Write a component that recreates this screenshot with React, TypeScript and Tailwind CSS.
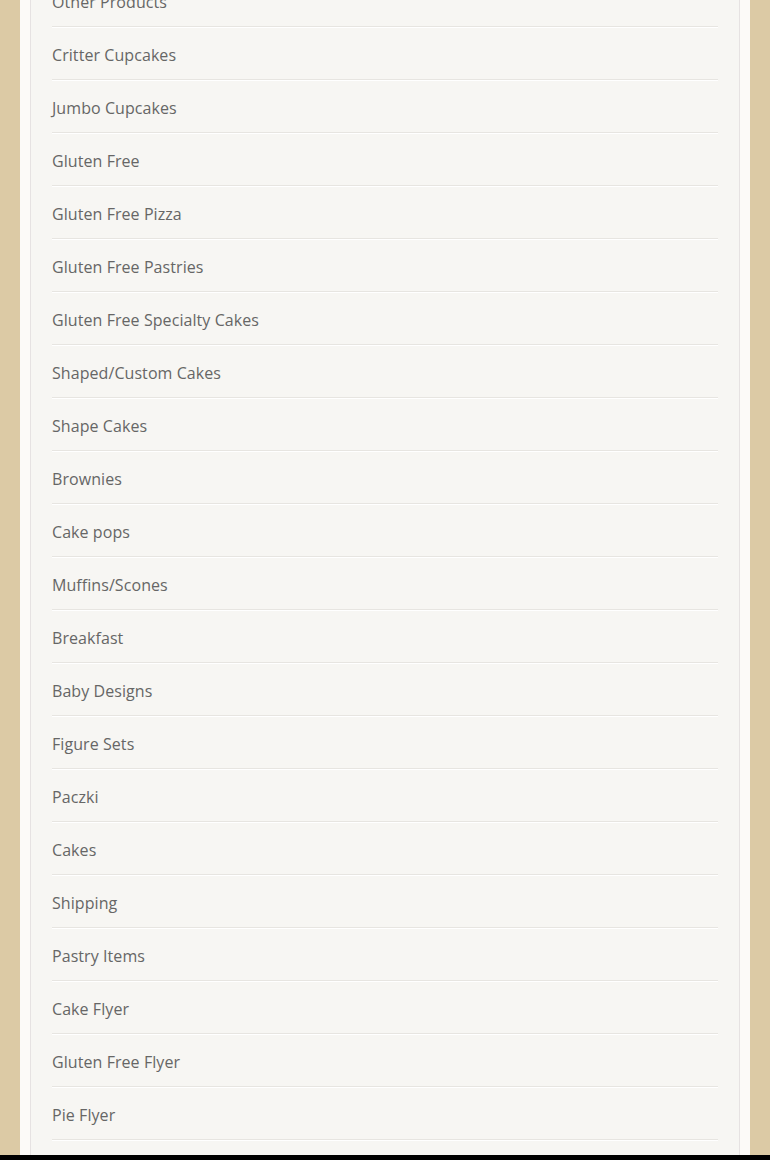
const categories = [
  'Other Products',
  'Critter Cupcakes',
  'Jumbo Cupcakes',
  'Gluten Free',
  'Gluten Free Pizza',
  'Gluten Free Pastries',
  'Gluten Free Specialty Cakes',
  'Shaped/Custom Cakes',
  'Shape Cakes',
  'Brownies',
  'Cake pops',
  'Muffins/Scones',
  'Breakfast',
  'Baby Designs',
  'Figure Sets',
  'Paczki',
  'Cakes',
  'Shipping',
  'Pastry Items',
  'Cake Flyer',
  'Gluten Free Flyer',
  'Pie Flyer',
];

export default function App() {
  return (
    <div className="min-h-screen bg-[#dccaa5] overflow-hidden font-['Open_Sans',sans-serif]">
      <div className="px-[20px]">
        <div className="-mt-[26px] bg-[#fcfaf8] px-[10px]">
          <div className="border-x border-[#e6e2e2] bg-[#f7f6f3] px-[21px] pb-[15px]">
            <ul>
              {categories.map((name) => (
                <li
                  key={name}
                  className="border-b border-[#e7e5e1] pt-[16px] pb-[12px] shadow-[0_1px_0_#ffffff]"
                >
                  <a
                    href="#"
                    className="text-[16px] leading-[24px] tracking-[0.07px] text-[#666666]"
                  >
                    {name}
                  </a>
                </li>
              ))}
            </ul>
          </div>
        </div>
      </div>
      <div className="h-[5px] bg-black" />
    </div>
  );
}
